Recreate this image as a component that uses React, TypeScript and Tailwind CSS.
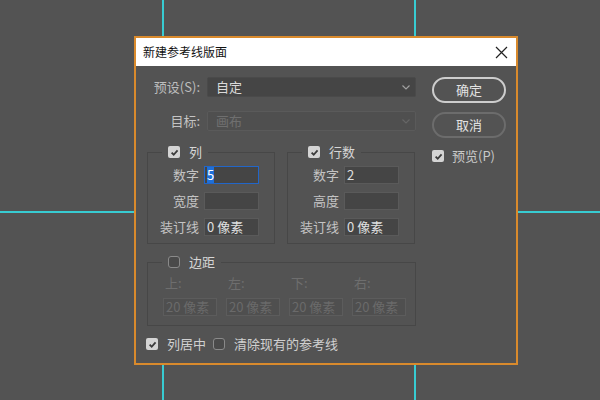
import React from "react";

function Check({ checked }: { checked: boolean }) {
  return checked ? (
    <span className="flex h-[12px] w-[12px] shrink-0 items-center justify-center rounded-[2px] bg-[#d4d4d4]">
      <svg width="9" height="9" viewBox="0 0 10 10">
        <path d="M1.8 5.2 L4.1 7.5 L8.4 2.6" stroke="#3b3b3b" strokeWidth="2" fill="none" />
      </svg>
    </span>
  ) : (
    <span className="block h-[12px] w-[12px] shrink-0 rounded-[3px] border border-[#8a8a8a] bg-[#4a4a4a]" />
  );
}

function Chevron({ color }: { color: string }) {
  return (
    <svg width="8" height="5" viewBox="0 0 8 5">
      <path d="M0.5 0.5 L4 4 L7.5 0.5" stroke={color} strokeWidth="1.2" fill="none" />
    </svg>
  );
}

function Field({ label, value, focused }: { label: string; value?: string; focused?: boolean }) {
  return (
    <div className="flex items-center">
      <span className="w-[51px] text-right text-[13px] leading-[16px] text-[#c4c4c4]">{label}</span>
      <span
        className={
          focused
            ? "ml-[5px] flex h-[18px] w-[55px] items-center border border-[#2266c8] bg-[#454545] pl-[2px] text-[13px] leading-[16px] text-[#e0e0e0]"
            : "ml-[5px] flex h-[18px] w-[55px] items-center border border-[#5a5a5a] bg-[#454545] pl-[2px] text-[13px] leading-[16px] text-[#e0e0e0]"
        }
      >
        {focused ? <span className="bg-[#1f6fd8] text-white">{value}</span> : value}
      </span>
    </div>
  );
}

function Group({ title, children }: { title: string; children: React.ReactNode }) {
  return (
    <fieldset className="w-[128px] border border-[#474747] pb-[7px]">
      <legend className="ml-[14px] px-[6px]">
        <span className="flex h-[16px] items-center gap-[9px]">
          <Check checked />
          <span className="text-[13px] leading-[16px] text-[#d6d6d6]">{title}</span>
        </span>
      </legend>
      <div className="flex flex-col gap-[8px] pt-[6px]">{children}</div>
    </fieldset>
  );
}

export default function App() {
  return (
    <div className="relative h-[400px] w-[600px] overflow-hidden bg-[#535353] font-['Noto_Sans_CJK_SC',sans-serif]">
      <div className="absolute left-[162px] top-0 h-[400px] w-[2px] bg-[#38ccd2]" />
      <div className="absolute left-[414px] top-0 h-[400px] w-[2px] bg-[#38ccd2]" />
      <div className="absolute left-0 top-[211px] h-[2px] w-[600px] bg-[#38ccd2]" />

      <div className="absolute left-[134px] top-[36px] flex h-[329px] w-[384px] flex-col border-2 border-[#d98a2c] bg-[#535353]">
        <div className="flex h-[28px] items-center justify-between bg-white pl-[7px] pr-[8px]">
          <span className="text-[12px] leading-[16px] text-[#111]">新建参考线版面</span>
          <svg width="13" height="13" viewBox="0 0 13 13">
            <path d="M1 1 L12 12 M12 1 L1 12" stroke="#222" strokeWidth="1.2" />
          </svg>
        </div>

        <div className="flex pl-[11px] pt-[11px]">
          <div className="flex w-[269px] flex-col">
            <div className="flex items-center">
              <span className="w-[53px] text-right text-[13px] leading-[16px] text-[#bdbdbd]">预设(S):</span>
              <span className="ml-[7px] flex h-[20px] w-[209px] items-center justify-between rounded-[2px] border border-[#4a4a4a] bg-[#454545] pl-[8px] pr-[5px] text-[13px] text-[#dadada]">
                自定
                <Chevron color="#a0a0a0" />
              </span>
            </div>
            <div className="mt-[14px] flex items-center">
              <span className="w-[53px] text-right text-[13px] leading-[16px] text-[#c4c4c4]">目标:</span>
              <span className="ml-[7px] flex h-[20px] w-[209px] items-center justify-between rounded-[2px] border border-[#5a5a5a] bg-[#4f4f4f] pl-[8px] pr-[5px] text-[13px] text-[#6f6f6f]">
                画布
                <Chevron color="#666" />
              </span>
            </div>

            <div className="mt-[13px] flex gap-[12px]">
              <Group title="列">
                <Field label="数字" value="5" focused />
                <Field label="宽度" value="" />
                <Field label="装订线" value="0 像素" />
              </Group>
              <Group title="行数">
                <Field label="数字" value="2" />
                <Field label="高度" value="" />
                <Field label="装订线" value="0 像素" />
              </Group>
            </div>

            <fieldset className="mt-[10px] w-[268px] border border-[#474747] pb-[9px]">
              <legend className="ml-[14px] px-[6px]">
                <span className="flex h-[16px] items-center gap-[9px]">
                  <Check checked={false} />
                  <span className="text-[13px] leading-[16px] text-[#d6d6d6]">边距</span>
                </span>
              </legend>
              <div className="grid grid-cols-[63px_63px_63px_63px] pl-[15px] pt-[5px]">
                {["上:", "左:", "下:", "右:"].map((l) => (
                  <div key={l} className="flex flex-col">
                    <span className="pl-[2px] text-[13px] leading-[16px] text-[#6e6e6e]">{l}</span>
                    <span className="mt-[7px] flex h-[18px] w-[54px] items-center border border-[#5c5c5c] bg-[#4f4f4f] pl-[2px] text-[13px] leading-[16px] text-[#6a6a6a]">
                      20 像素
                    </span>
                  </div>
                ))}
              </div>
            </fieldset>

            <div className="-ml-[1px] mt-[10px] flex items-center">
              <Check checked />
              <span className="ml-[9px] text-[13px] leading-[16px] text-[#d0d0d0]">列居中</span>
              <span className="ml-[7px] flex">
                <Check checked={false} />
              </span>
              <span className="ml-[9px] text-[13px] leading-[16px] text-[#d0d0d0]">清除现有的参考线</span>
            </div>
          </div>

          <div className="ml-[16px] flex w-[74px] flex-col">
            <div className="flex h-[26px] items-center justify-center rounded-full border-2 border-[#cdcdcd] text-[13px] text-[#e2e2e2]">
              确定
            </div>
            <div className="mt-[9px] flex h-[26px] items-center justify-center rounded-full border-2 border-[#6c6c6c] text-[13px] text-[#e2e2e2]">
              取消
            </div>
            <div className="mt-[10px] flex items-center">
              <Check checked />
              <span className="ml-[8px] text-[13px] leading-[16px] text-[#c8c8c8]">预览(P)</span>
            </div>
          </div>
        </div>
      </div>
    </div>
  );
}
